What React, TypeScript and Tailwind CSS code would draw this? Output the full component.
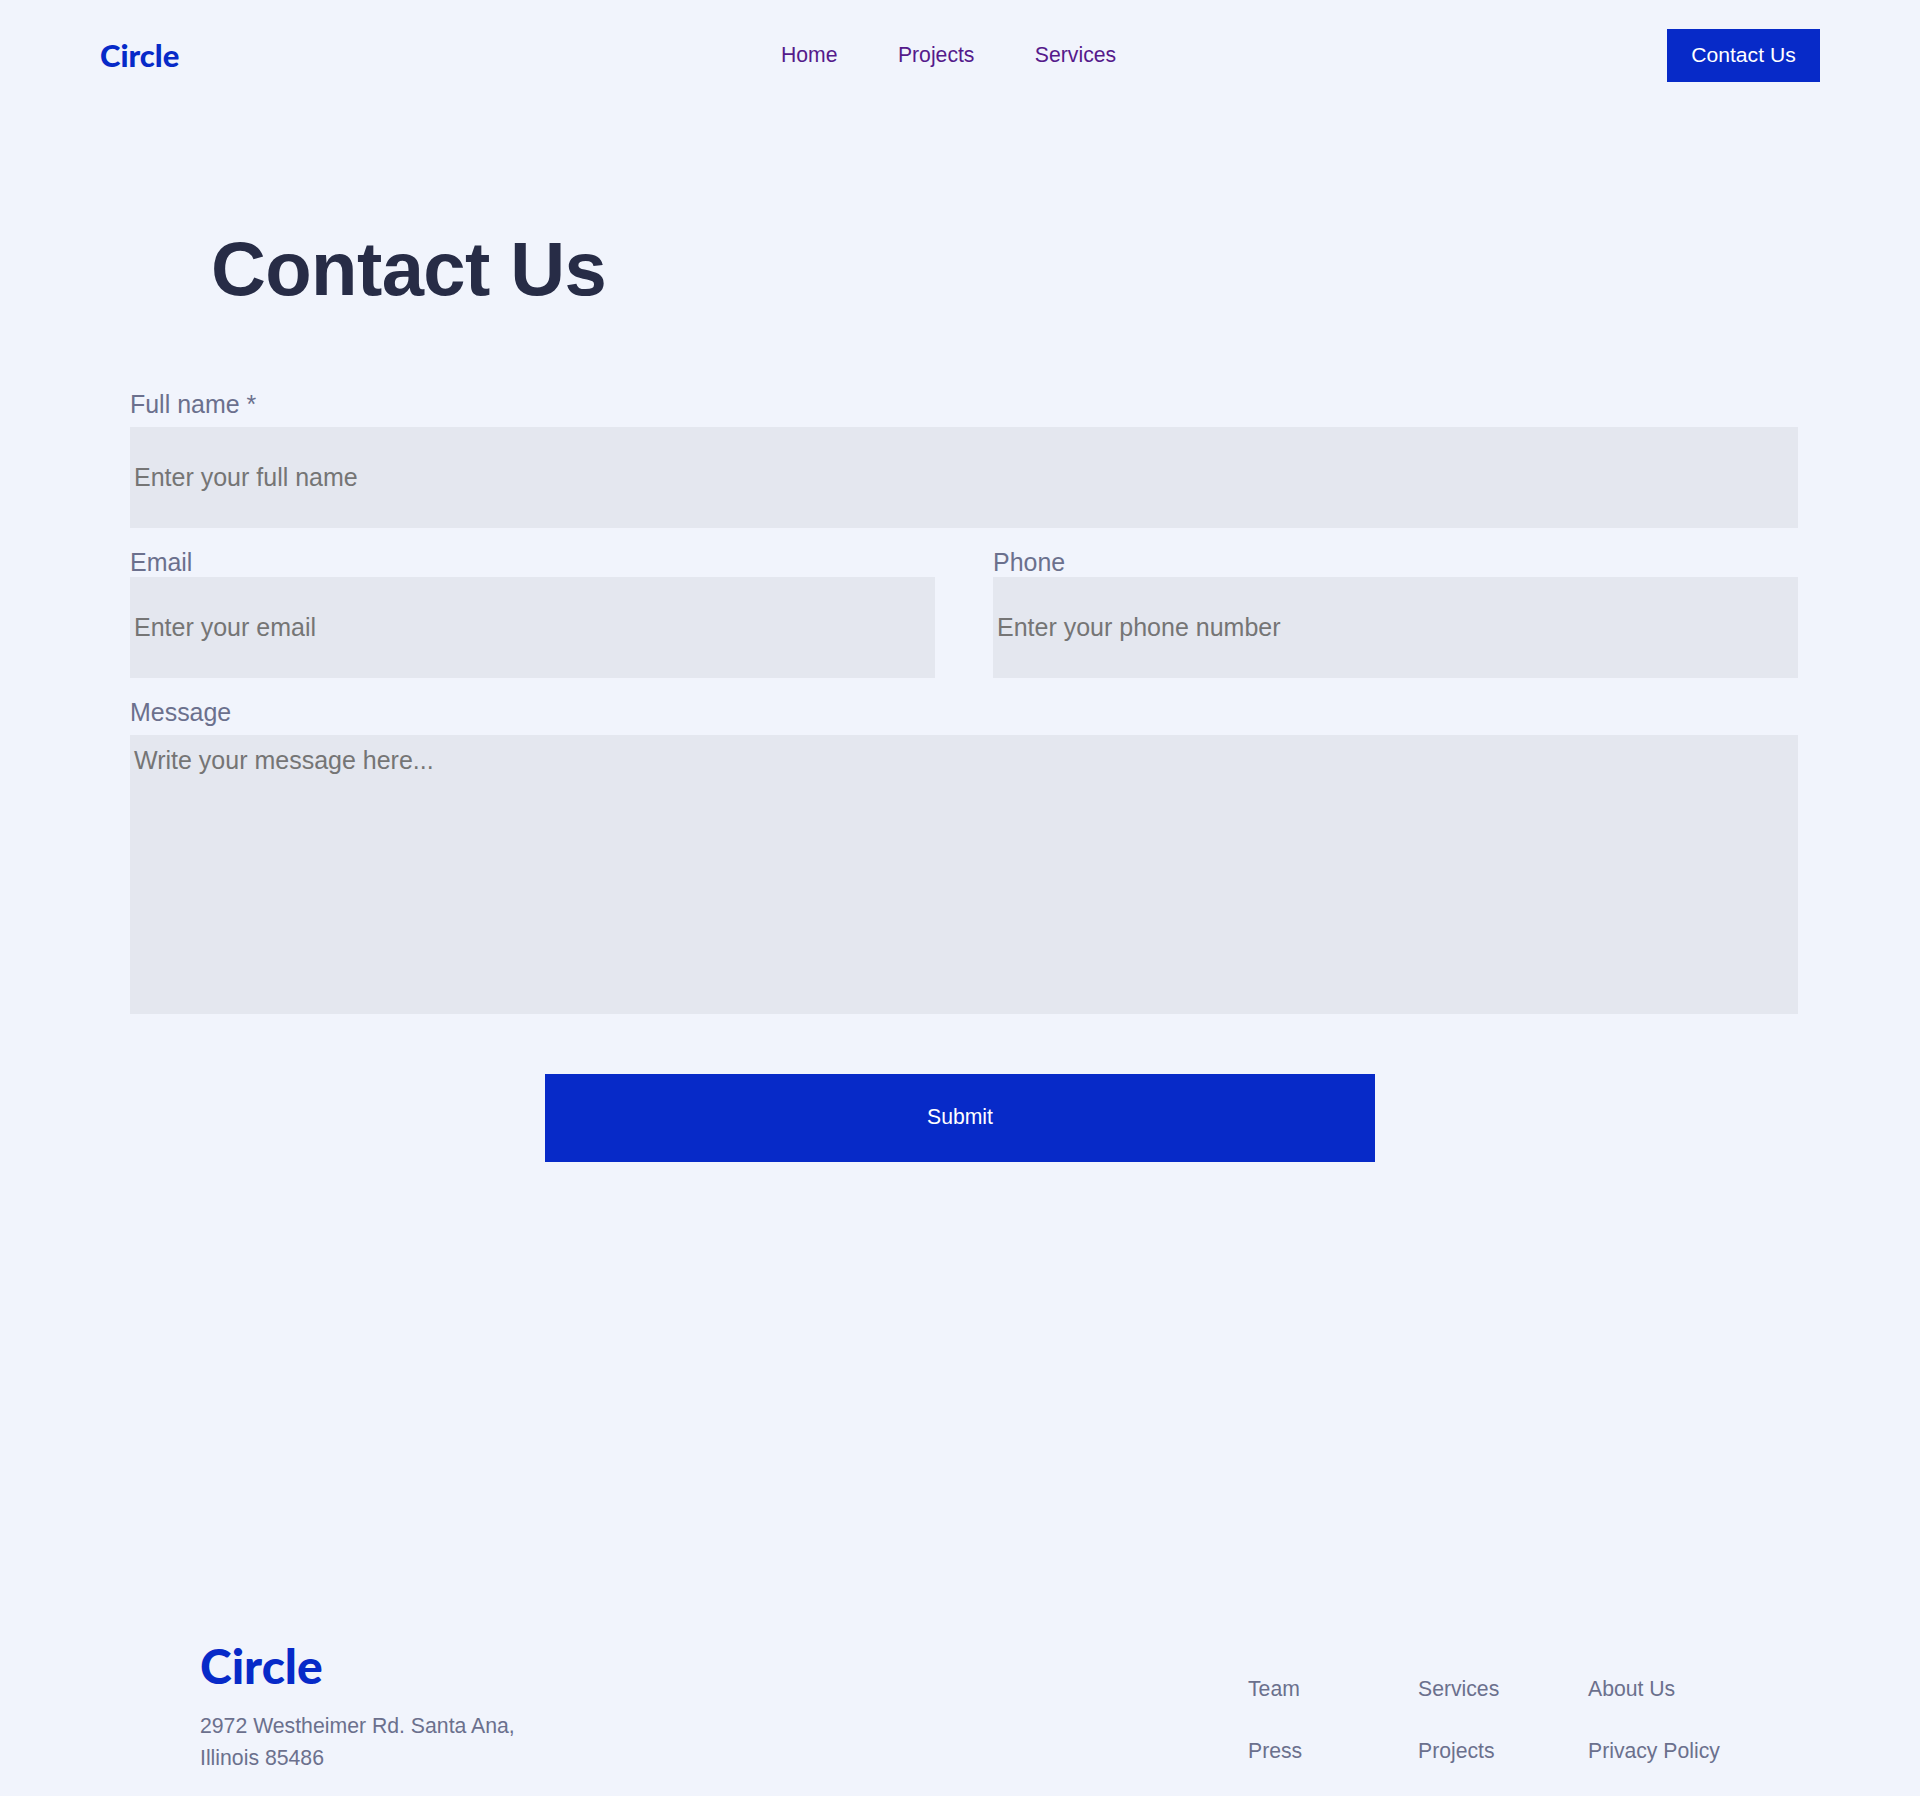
import React from 'react';

const navLinks = ['Home', 'Projects', 'Services'];
const footerLinks = ['Team', 'Services', 'About Us', 'Press', 'Projects', 'Privacy Policy'];

const labelClass = 'block text-[24.96px] leading-[30px] text-[#6b708d]';
const fieldClass =
  'block w-full resize-none bg-[#e4e7ef] px-1 text-[25px] outline-none placeholder:text-[#757575] placeholder:opacity-100';

function Header() {
  return (
    <header className="flex h-[111px] items-center pl-[100px] pr-[100px]">
      <a
        href="#"
        className="w-[681px] font-['Lato'] text-[31px] leading-[31px] font-black text-[#072ac8]"
      >
        Circle
      </a>
      <nav className="-mt-0.5 flex gap-[60.4px] text-[21.2px] leading-6 text-[#551a8b]">
        {navLinks.map((link) => (
          <a key={link} href="#">
            {link}
          </a>
        ))}
      </nav>
      <a
        href="#"
        className="ml-auto flex h-[53px] w-[153px] items-center justify-center bg-[#072ac8] pb-0.5 text-[21.12px] leading-6 text-white"
      >
        Contact Us
      </a>
    </header>
  );
}

function ContactForm() {
  return (
    <form className="ml-[130px] w-[1668px]">
      <label className={labelClass} htmlFor="name">
        Full name *
      </label>
      <input id="name" className={`${fieldClass} mt-2 h-[101px]`} placeholder="Enter your full name" />
      <div className="mt-[19px] grid grid-cols-2 gap-[58px]">
        <div>
          <label className={labelClass} htmlFor="email">
            Email
          </label>
          <input id="email" className={`${fieldClass} h-[101px]`} placeholder="Enter your email" />
        </div>
        <div>
          <label className={labelClass} htmlFor="phone">
            Phone
          </label>
          <input id="phone" className={`${fieldClass} h-[101px]`} placeholder="Enter your phone number" />
        </div>
      </div>
      <label className={`${labelClass} mt-[19px]`} htmlFor="message">
        Message
      </label>
      <textarea
        id="message"
        className={`${fieldClass} mt-2 h-[279px] pt-[11px] leading-[29px]`}
        placeholder="Write your message here..."
      />
      <button
        type="button"
        className="mt-[60px] ml-[415px] block h-[88px] w-[830px] bg-[#072ac8] pb-0.5 text-[21.2px] text-white"
      >
        Submit
      </button>
    </form>
  );
}

function Footer() {
  return (
    <footer className="mt-auto flex h-[157px] justify-between pl-[200px]">
      <div>
        <a
          href="#"
          className="block font-['Lato'] text-[48px] leading-[54px] font-black text-[#072ac8]"
        >
          Circle
        </a>
        <p className="mt-[18px] w-[330px] text-[21.24px] leading-[31.68px] text-[#6b708d]">
          2972 Westheimer Rd. Santa Ana, Illinois 85486
        </p>
      </div>
      <ul className="mt-[38px] mr-[162px] grid h-fit grid-cols-[170px_170px_170px] gap-y-[38px] text-[21.2px] leading-6 text-[#6b708d]">
        {footerLinks.map((link) => (
          <li key={link}>
            <a href="#">{link}</a>
          </li>
        ))}
      </ul>
    </footer>
  );
}

export default function App() {
  return (
    <div className="flex h-[1796px] w-full flex-col overflow-hidden bg-[#f1f4fc] font-['Liberation_Sans',Arial,sans-serif]">
      <Header />
      <h1 className="mt-[113px] mb-[75px] ml-[211px] text-[76px] leading-[90px] font-bold tracking-[-0.6px] text-[#272c46]">
        Contact Us
      </h1>
      <ContactForm />
      <Footer />
    </div>
  );
}
